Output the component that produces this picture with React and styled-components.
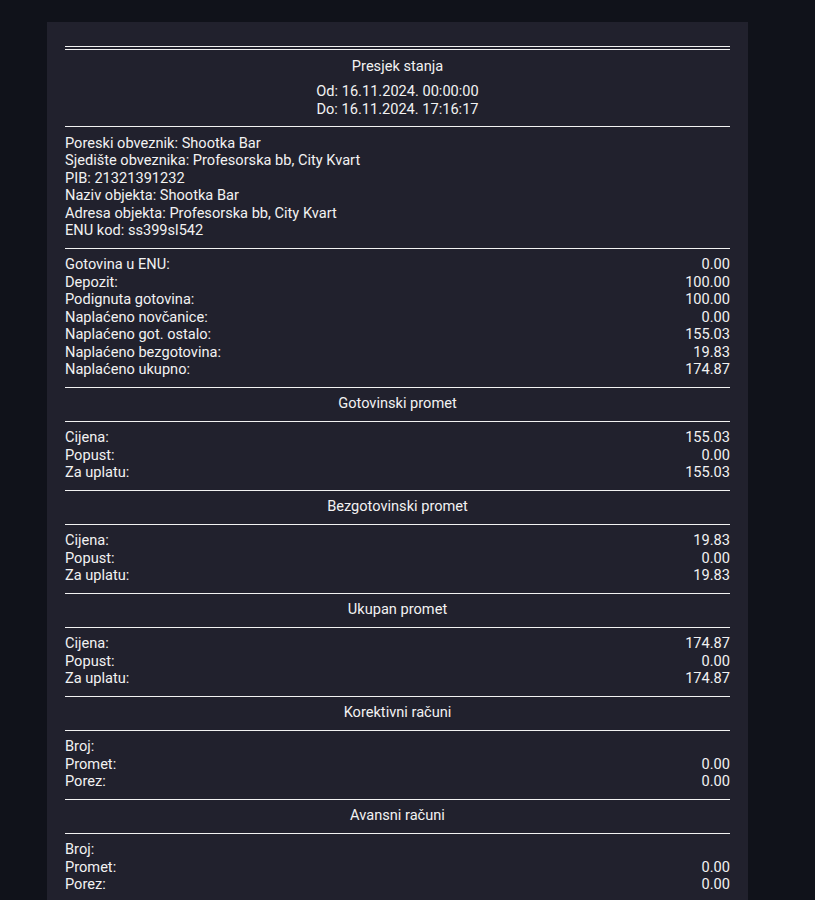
import React from 'react';
import styled, { createGlobalStyle } from 'styled-components';

const GlobalStyle = createGlobalStyle`
  html, body {
    margin: 0;
    padding: 0;
    background: #10121a;
  }
  body {
    font-family: Roboto, "Liberation Sans", sans-serif;
    font-size: 14.6px;
    line-height: 17.5px;
    color: #f2f2f2;
  }
`;

const Page = styled.div`
  min-height: 100vh;
  padding: 22px 0 0 47px;
  box-sizing: border-box;
`;

const Receipt = styled.div`
  width: 701px;
  box-sizing: border-box;
  background: #21212d;
  padding: 24px 18px 40px;
`;

const DoubleRule = styled.div`
  height: 2px;
  border-top: 1px solid #f2f2f2;
  border-bottom: 1px solid #f2f2f2;
`;

const Block = styled.div`
  padding: 7.5px 0 8px;
  border-bottom: ${p => (p.last ? 'none' : '1px solid #f2f2f2')};
  text-align: ${p => (p.center ? 'center' : 'left')};
`;

const Dates = styled.div`
  margin-top: 8px;
`;

const Row = styled.div`
  display: flex;
  justify-content: space-between;
`;

const summary = [
  ['Gotovina u ENU:', '0.00'],
  ['Depozit:', '100.00'],
  ['Podignuta gotovina:', '100.00'],
  ['Naplaćeno novčanice:', '0.00'],
  ['Naplaćeno got. ostalo:', '155.03'],
  ['Naplaćeno bezgotovina:', '19.83'],
  ['Naplaćeno ukupno:', '174.87'],
];

const sections = [
  {
    title: 'Gotovinski promet',
    rows: [['Cijena:', '155.03'], ['Popust:', '0.00'], ['Za uplatu:', '155.03']],
  },
  {
    title: 'Bezgotovinski promet',
    rows: [['Cijena:', '19.83'], ['Popust:', '0.00'], ['Za uplatu:', '19.83']],
  },
  {
    title: 'Ukupan promet',
    rows: [['Cijena:', '174.87'], ['Popust:', '0.00'], ['Za uplatu:', '174.87']],
  },
  {
    title: 'Korektivni računi',
    rows: [['Broj:', ''], ['Promet:', '0.00'], ['Porez:', '0.00']],
  },
  {
    title: 'Avansni računi',
    rows: [['Broj:', ''], ['Promet:', '0.00'], ['Porez:', '0.00']],
  },
];

const Rows = ({ rows }) =>
  rows.map(([label, value]) => (
    <Row key={label}>
      <span>{label}</span>
      <span>{value}</span>
    </Row>
  ));

export default function App() {
  return (
    <>
      <GlobalStyle />
      <Page>
        <Receipt>
          <DoubleRule />
          <Block center>
            <div>Presjek stanja</div>
            <Dates>
              <div>Od: 16.11.2024. 00:00:00</div>
              <div>Do: 16.11.2024. 17:16:17</div>
            </Dates>
          </Block>
          <Block>
            <div>Poreski obveznik: Shootka Bar</div>
            <div>Sjedište obveznika: Profesorska bb, City Kvart</div>
            <div>PIB: 21321391232</div>
            <div>Naziv objekta: Shootka Bar</div>
            <div>Adresa objekta: Profesorska bb, City Kvart</div>
            <div>ENU kod: ss399sl542</div>
          </Block>
          <Block>
            <Rows rows={summary} />
          </Block>
          {sections.map((s, i) => (
            <React.Fragment key={s.title}>
              <Block center>{s.title}</Block>
              <Block last={i === sections.length - 1}>
                <Rows rows={s.rows} />
              </Block>
            </React.Fragment>
          ))}
        </Receipt>
      </Page>
    </>
  );
}
